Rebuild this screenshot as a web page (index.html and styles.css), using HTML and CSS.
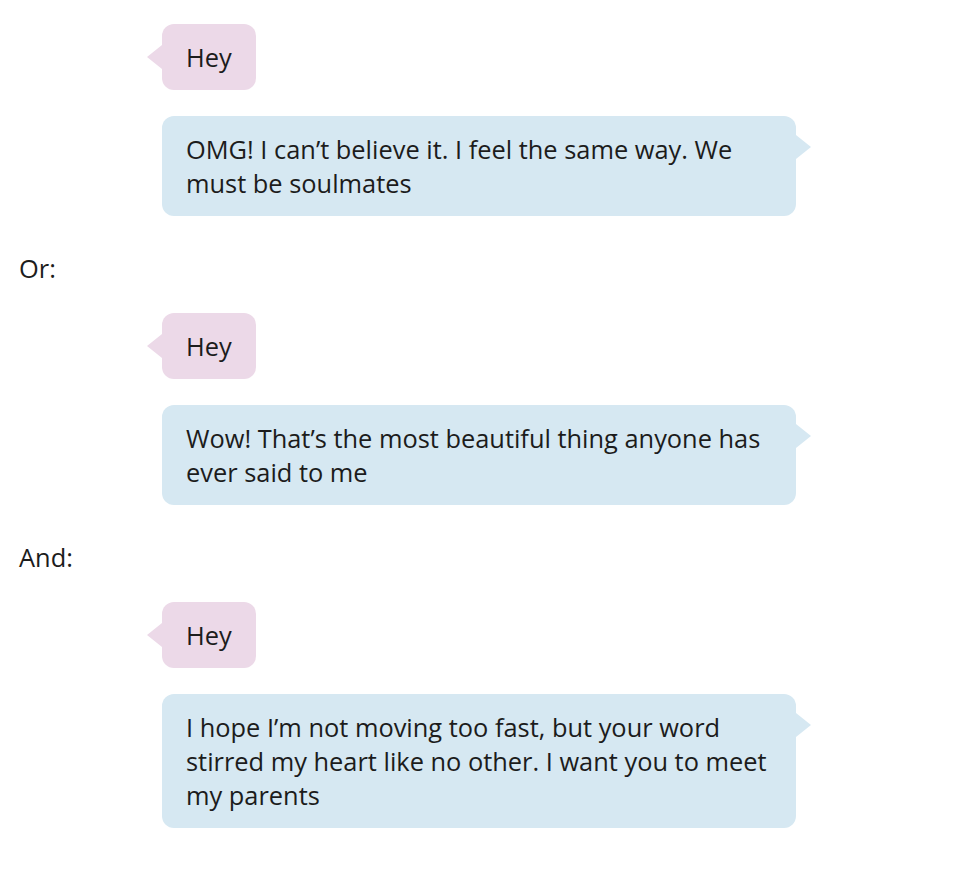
FILE: index.html
```html
<!DOCTYPE html>
<html>
<head>
<meta charset="utf-8">
<link rel="stylesheet" href="styles.css">
</head>
<body>
<main class="page">
  <div class="bubble them">Hey</div>
  <div class="bubble me">OMG! I can’t believe it. I feel the same way. We must be soulmates</div>
  <p class="label">Or:</p>
  <div class="bubble them">Hey</div>
  <div class="bubble me">Wow! That’s the most beautiful thing anyone has ever said to me</div>
  <p class="label">And:</p>
  <div class="bubble them">Hey</div>
  <div class="bubble me">I hope I’m not moving too fast, but your word stirred my heart like no other. I want you to meet my parents</div>
</main>
</body>
</html>
```

FILE: styles.css
```css
html, body {
  margin: 0;
  padding: 0;
  background: #ffffff;
}
body {
  font-family: "Open Sans", "Noto Sans", sans-serif;
  font-size: 25.4px;
  line-height: 34px;
  color: #1c1c1c;
}
.page {
  display: flex;
  flex-direction: column;
  align-items: flex-start;
  gap: 26px;
  padding: 24px 0 0 19px;
}
.label {
  margin: 9px 0 2px 0;
}
.bubble {
  position: relative;
  margin-left: 143px;
  padding: 16px 24px;
  border-radius: 12px;
  box-sizing: border-box;
}
.bubble::after {
  content: "";
  position: absolute;
  width: 0;
  height: 0;
  border-top: 12px solid transparent;
  border-bottom: 12px solid transparent;
}
.them {
  background: #ecd9e8;
}
.them::after {
  left: -15px;
  top: 21px;
  border-right: 15px solid #ecd9e8;
}
.me {
  background: #d6e8f2;
  width: 634px;
}
.me::after {
  right: -15px;
  top: 19px;
  border-left: 15px solid #d6e8f2;
}
```
